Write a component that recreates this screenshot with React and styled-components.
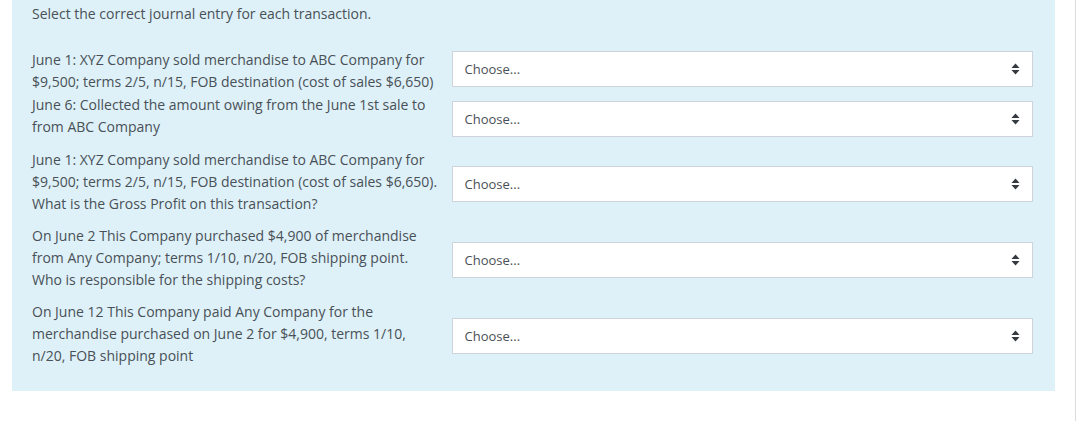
import React from "react";
import styled, { createGlobalStyle } from "styled-components";

const Global = createGlobalStyle`
  html, body { margin: 0; padding: 0; background: #fff; }
  body { font-family: "Open Sans", "Noto Sans", sans-serif; color: #495057; }
`;

const Page = styled.div`
  position: relative;
  display: flex;
  height: 421px;
  padding-left: 12px;
  box-sizing: border-box;
`;

const Divider = styled.div`
  position: absolute;
  top: 0;
  bottom: 0;
  left: 1075px;
  width: 1px;
  background: #dcdcdc;
`;

const Panel = styled.div`
  width: 1043px;
  height: 391px;
  background: #def1f8;
  box-sizing: border-box;
  padding: 3px 22px 0 20px;
  display: flex;
  flex-direction: column;
`;

const Prompt = styled.div`
  font-size: 14px;
  line-height: 22px;
  margin-bottom: 24px;
`;

const Row = styled.div`
  display: flex;
  align-items: flex-start;
  margin-top: ${(p) => p.$gap || 0}px;
`;

const Text = styled.div`
  width: 420px;
  font-size: 14px;
  line-height: 22px;
  white-space: nowrap;
`;

const Select = styled.div`
  margin-top: ${(p) => p.$offset}px;
  width: 582px;
  height: 36px;
  box-sizing: border-box;
  background: #fff;
  border: 1px solid #ced4da;
  display: flex;
  align-items: center;
  justify-content: space-between;
  padding: 0 12px 0 12px;
  font-size: 13px;
  color: #495057;
`;

const Arrows = () => (
  <svg width="9" height="12" viewBox="0 0 9 12" aria-hidden="true">
    <path d="M4.5 0.5 L8.5 5 H0.5 Z" fill="#343a40" />
    <path d="M4.5 11.5 L8.5 7 H0.5 Z" fill="#343a40" />
  </svg>
);

const rows = [
  {
    gap: 0,
    offset: 2,
    lines: [
      "June 1: XYZ Company sold merchandise to ABC Company for",
      "$9,500; terms 2/5, n/15, FOB destination (cost of sales $6,650)",
    ],
  },
  {
    gap: 1,
    offset: 7,
    lines: [
      "June 6: Collected the amount owing from the June 1st sale to",
      "from ABC Company",
    ],
  },
  {
    gap: 11,
    offset: 17,
    lines: [
      "June 1: XYZ Company sold merchandise to ABC Company for",
      "$9,500; terms 2/5, n/15, FOB destination (cost of sales $6,650).",
      "What is the Gross Profit on this transaction?",
    ],
  },
  {
    gap: 10,
    offset: 17,
    lines: [
      "On June 2 This Company purchased $4,900 of merchandise",
      "from Any Company; terms 1/10, n/20, FOB shipping point.",
      "Who is responsible for the shipping costs?",
    ],
  },
  {
    gap: 10,
    offset: 17,
    lines: [
      "On June 12 This Company paid Any Company for the",
      "merchandise purchased on June 2 for $4,900, terms 1/10,",
      "n/20, FOB shipping point",
    ],
  },
];

export default function App() {
  return (
    <>
      <Global />
      <Page>
        <Panel>
          <Prompt>Select the correct journal entry for each transaction.</Prompt>
          {rows.map((r, i) => (
            <Row key={i} $gap={r.gap}>
              <Text>
                {r.lines.map((l, j) => (
                  <div key={j}>{l}</div>
                ))}
              </Text>
              <Select $offset={r.offset}>
                <span>Choose...</span>
                <Arrows />
              </Select>
            </Row>
          ))}
        </Panel>
        <Divider />
      </Page>
    </>
  );
}
